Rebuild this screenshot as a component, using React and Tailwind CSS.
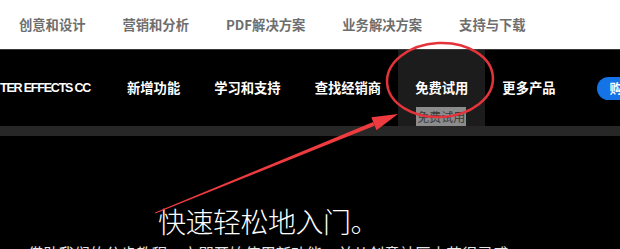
export default function App() {
  const cjk = { fontFamily: '"Noto Sans CJK SC", "Noto Sans", sans-serif' };
  const topItems = ["创意和设计", "营销和分析", "PDF解决方案", "业务解决方案", "支持与下载"];
  const navItems = ["新增功能", "学习和支持", "查找经销商", "免费试用", "更多产品"];
  return (
    <div className="relative w-[620px] h-[249px] overflow-hidden bg-black" style={cjk}>
      <div className="h-[49px] bg-white flex items-center pl-[19px] gap-[37px] text-[13.3px] font-bold text-[#6e6e6e]">
        {topItems.map((t) => (
          <span key={t} className="leading-none shrink-0">{t}</span>
        ))}
      </div>
      <div className="h-[77px] bg-black border-t border-[#3a3a3a] flex items-stretch text-white text-[13.3px] font-bold">
        <div className="w-[110px] shrink-0 flex items-center">
          <span
            className="text-[12.5px] tracking-[-1.2px] whitespace-nowrap"
            style={{ fontFamily: '"Liberation Sans", Arial, sans-serif' }}
          >
            TER EFFECTS CC
          </span>
        </div>
        {navItems.map((t) => (
          <div
            key={t}
            className={
              "relative shrink-0 flex items-center px-[17px] whitespace-nowrap " +
              (t === "免费试用" ? "bg-[#1c1c1c]" : "")
            }
          >
            <span className="pb-[1px]">{t}</span>
            {t === "免费试用" && (
              <span className="absolute left-[18px] top-[57px] h-[19px] px-[1px] bg-[#8c8c8c] text-[#3a3a3a] text-[12px] font-normal leading-[19px]">
                免费试用
              </span>
            )}
          </div>
        ))}
        <div className="shrink-0 flex items-center ml-[24px]">
          <div className="h-[23px] rounded-full bg-[#1473e6] pl-[13px] pr-[14px] flex items-center text-white text-[13px] font-bold whitespace-nowrap">
            购买
          </div>
        </div>
      </div>
      <div className="h-[10px] bg-[#272727]" />
      <div className="w-[536px] flex flex-col items-center text-white">
        <h1 className="mt-[68px] text-[28px] font-light leading-[34px] tracking-[-0.5px]">快速轻松地入门。</h1>
        <p className="mt-[5px] text-[15.5px] leading-[20px] whitespace-nowrap text-[#e6e6e6]">
          借助我们的分步教程，立即开始使用新功能，并从创意社区中获得灵感
        </p>
      </div>
      <svg className="absolute left-0 top-0 pointer-events-none" width="620" height="249" viewBox="0 0 620 249">
        <ellipse cx="440" cy="80" rx="53" ry="37" fill="none" stroke="#e3343b" strokeWidth="2.5" transform="rotate(-3 440 80)" />
        <polygon points="155,212.6 155.4,213.6 374.7,125.7 373.1,121.9" fill="#ee3b40" />
        <polygon points="398,114 376.5,130.3 371.3,117.3" fill="#ee3b40" />
      </svg>
    </div>
  );
}
